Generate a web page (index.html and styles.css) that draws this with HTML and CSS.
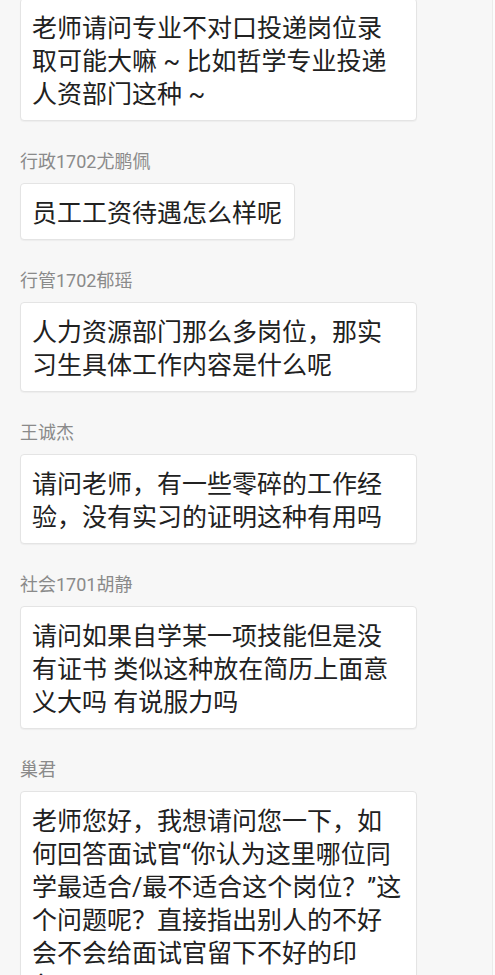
FILE: index.html
```html
<!DOCTYPE html>
<html lang="zh-CN">
<head>
<meta charset="utf-8">
<title>聊天记录</title>
<link rel="stylesheet" href="styles.css">
</head>
<body>
<div class="chat">
  <div class="msg first">
    <div class="bubble">老师请问专业不对口投递岗位录取可能大嘛 ~ 比如哲学专业投递人资部门这种 ~</div>
  </div>
  <div class="msg">
    <div class="name">行政1702尤鹏佩</div>
    <div class="bubble">员工工资待遇怎么样呢</div>
  </div>
  <div class="msg">
    <div class="name">行管1702郁瑶</div>
    <div class="bubble">人力资源部门那么多岗位，那实习生具体工作内容是什么呢</div>
  </div>
  <div class="msg">
    <div class="name">王诚杰</div>
    <div class="bubble">请问老师，有一些零碎的工作经验，没有实习的证明这种有用吗</div>
  </div>
  <div class="msg">
    <div class="name">社会1701胡静</div>
    <div class="bubble">请问如果自学某一项技能但是没有证书 类似这种放在简历上面意义大吗 有说服力吗</div>
  </div>
  <div class="msg">
    <div class="name">巢君</div>
    <div class="bubble">老师您好，我想请问您一下，如何回答面试官“你认为这里哪位同学最适合/最不适合这个岗位？”这个问题呢？直接指出别人的不好会不会给面试官留下不好的印象？</div>
  </div>
</div>
</body>
</html>
```

FILE: styles.css
```css
html {
  background: #fcfcfc;
}

body {
  margin: 0;
  font-family: "Roboto", "Noto Sans CJK SC", sans-serif;
  overflow: hidden;
}

.chat {
  width: 493px;
  min-height: 975px;
  box-sizing: border-box;
  background: #f7f7f7;
  border-right: 1px solid #ebebeb;
  padding: 0 0 40px 20px;
  display: flex;
  flex-direction: column;
}

.msg {
  display: flex;
  flex-direction: column;
  align-items: flex-start;
}

.msg.first {
  margin-top: -2.5px;
}

.name {
  margin: 29px 0 8.5px 0;
  font-size: 18px;
  line-height: 24px;
  color: #8a8a8a;
  white-space: nowrap;
}

.bubble {
  box-sizing: border-box;
  max-width: 397px;
  width: fit-content;
  padding: 13.5px 12px 9px 11px;
  background: #ffffff;
  border: 1px solid #e4e4e4;
  border-radius: 4px;
  box-shadow: 0 1px 1px rgba(0, 0, 0, 0.04);
  font-size: 25px;
  line-height: 33px;
  color: #212121;
}
```
